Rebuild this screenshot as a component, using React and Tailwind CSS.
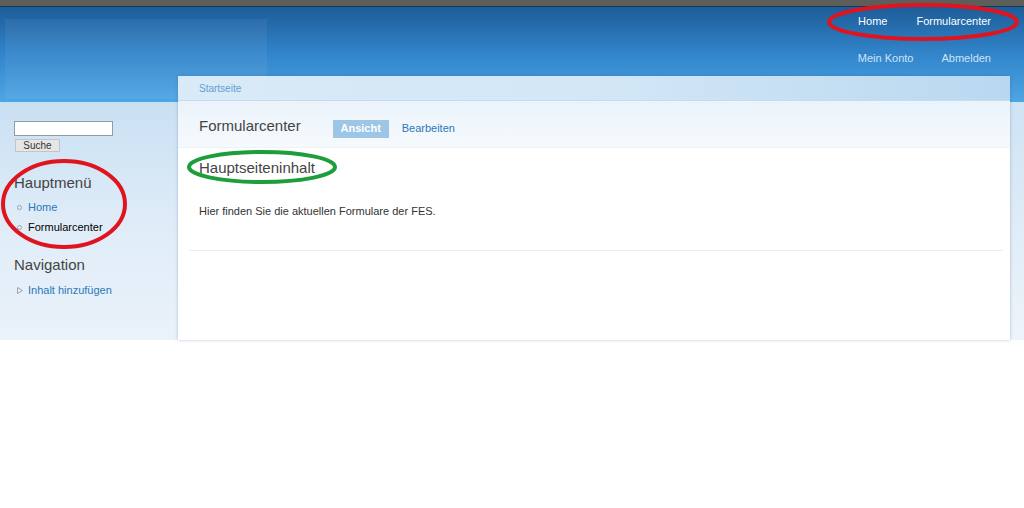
import React from "react";

export default function App() {
  return (
    <div className="relative w-[1024px] h-[508px] bg-white overflow-hidden font-['Liberation_Sans',Arial,sans-serif]">
      {/* top dark bar */}
      <div className="h-[7px] bg-[#5d5d5a] border-b border-[#123a5e]" />
      {/* header */}
      <div className="h-[95px] bg-gradient-to-b from-[#1d5c98] via-[#3285cb] to-[#4ea6e3] flex justify-between">
        <div className="ml-[5px] mt-[12px] w-[262px] h-[80px] bg-white/5" />
        <div className="flex flex-col items-end pr-[33px]">
          <div className="flex gap-[29px] mt-[8px] text-[11px] text-white leading-[13px]">
            <span>Home</span>
            <span>Formularcenter</span>
          </div>
          <div className="flex gap-[28px] mt-[24px] text-[11px] text-[#cde3f6] leading-[13px]">
            <span>Mein Konto</span>
            <span>Abmelden</span>
          </div>
        </div>
      </div>
      {/* main */}
      <div className="flex items-start">
        <aside className="w-[178px] h-[238px] bg-gradient-to-b from-[#c9e0f3] via-[#dfecf8] to-[#eaf2fa] pl-[14px] pt-[19px]">
          <div className="w-[99px] h-[15px] bg-white border border-[#8f9aa3]" />
          <div className="mt-[3px] ml-[1px] w-[45px] h-[13px] bg-[#e6e6e6] border border-[#c4c4c4] text-[10px] leading-[11px] text-[#333] text-center">
            Suche
          </div>
          <h2 className="mt-[22px] text-[15px] leading-[18px] text-[#444]">Hauptmenü</h2>
          <ul className="mt-[5px] text-[11px] leading-[20px]">
            <li className="flex items-center">
              <span className="ml-[3px] w-[5px] h-[5px] rounded-full border border-[#9aa6b0]" />
              <span className="ml-[6px] text-[#2a78b8]">Home</span>
            </li>
            <li className="flex items-center">
              <span className="ml-[3px] w-[5px] h-[5px] rounded-full border border-[#9aa6b0]" />
              <span className="ml-[6px] text-black">Formularcenter</span>
            </li>
          </ul>
          <h2 className="mt-[19px] text-[15px] leading-[18px] text-[#444]">Navigation</h2>
          <ul className="mt-[6px] text-[11px] leading-[20px]">
            <li className="flex items-center">
              <svg width="6" height="7" viewBox="0 0 6 7" className="ml-[3px]">
                <path d="M0.5 0.5 L5.5 3.5 L0.5 6.5 Z" fill="none" stroke="#9aa6b0" strokeWidth="1" />
              </svg>
              <span className="ml-[5px] text-[#2a78b8]">Inhalt hinzufügen</span>
            </li>
          </ul>
        </aside>
        <main className="relative z-10 w-[832px] h-[264px] -mt-[26px] bg-white shadow-[0_0_3px_rgba(40,90,140,0.35)] flex flex-col">
          <div className="h-[25px] bg-gradient-to-r from-[#d9eaf8] via-[#d3e7f6] to-[#b9d8f0] px-[21px] flex items-center border-b border-[#c5dcef]">
            <span className="text-[10px] text-[#5f9fd2]">Startseite</span>
          </div>
          <div className="h-[47px] bg-gradient-to-b from-[#eaf3fb] to-[#f6fafd] border-b border-[#eef3f8] px-[21px] flex items-center pt-[9px]">
            <h1 className="text-[15px] text-[#444] leading-[18px] -mt-[6px]">Formularcenter</h1>
            <span className="ml-[32px] w-[56px] h-[18px] bg-[#9dc5e5] text-white text-[11px] font-bold flex items-center justify-center">
              Ansicht
            </span>
            <span className="ml-[13px] text-[11px] text-[#2a78b8]">Bearbeiten</span>
          </div>
          <div className="px-[21px] pt-[11px]">
            <h2 className="text-[15px] leading-[18px] text-[#444]">Hauptseiteninhalt</h2>
            <p className="mt-[27px] text-[11px] leading-[14px] text-[#333]">
              Hier finden Sie die aktuellen Formulare der FES.
            </p>
          </div>
          <div className="mt-[32px] ml-[11px] mr-[7px] border-t border-[#e6edf3]" />
        </main>
        <div className="w-[14px] h-[238px] bg-gradient-to-b from-[#cfe3f4] to-[#eef4fa]" />
      </div>

      {/* annotation ellipses */}
      <svg className="absolute left-0 top-0 z-20 pointer-events-none" width="1024" height="508">
        <ellipse cx="923" cy="22" rx="94" ry="17" fill="none" stroke="#e0141e" strokeWidth="4" />
        <ellipse cx="64" cy="204" rx="61" ry="43" fill="none" stroke="#e0141e" strokeWidth="4" />
        <ellipse cx="262" cy="167" rx="73" ry="15" fill="none" stroke="#1e9e3a" strokeWidth="4" />
      </svg>
    </div>
  );
}
